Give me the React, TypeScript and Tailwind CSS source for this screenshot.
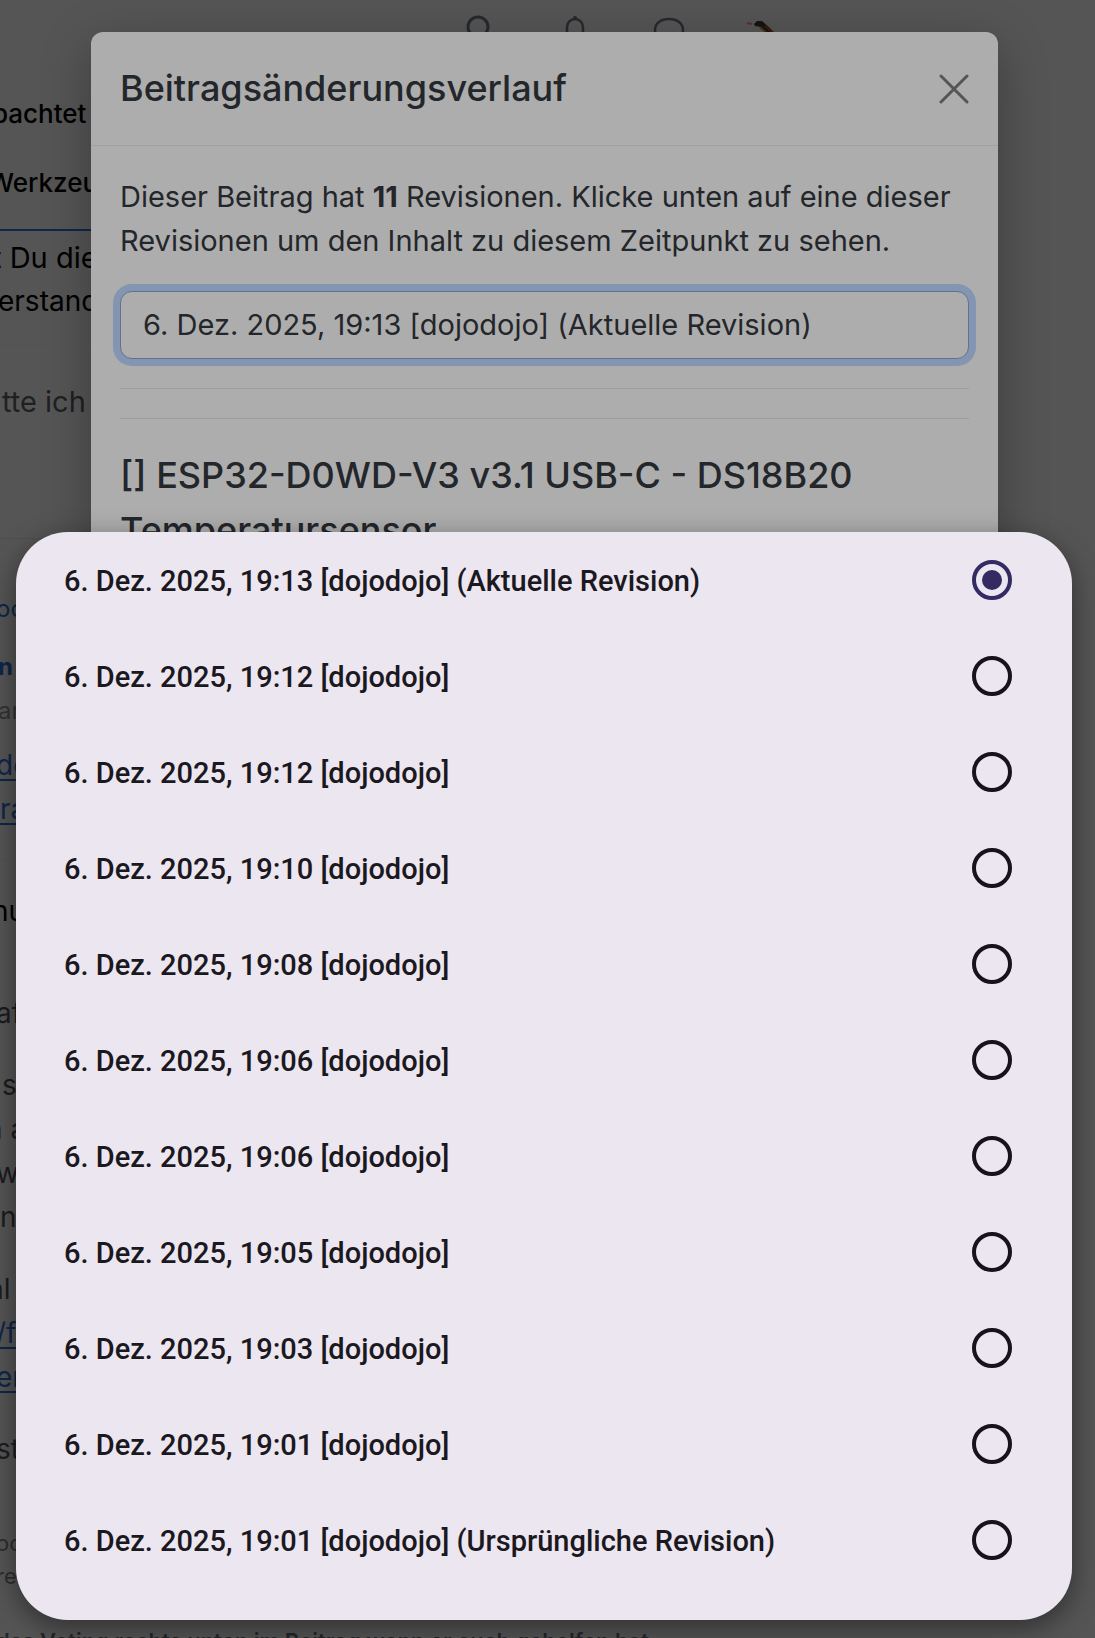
type Line = { text: string; className: string };

// Forum page lines that stay visible left of the dialog and the option sheet
const topLines: Line[] = [
  { text: "bachtet", className: "mt-[52px] -ml-2 text-[26px] font-medium text-black" },
  { text: "Werkzeu", className: "mt-[25px] -ml-3 text-[26px] font-medium text-black" },
];

const introLines: Line[] = [
  { text: "t Du die", className: "mt-[5px] -ml-2 text-[29px] text-black" },
  { text: "erstand", className: "-mt-px -ml-0.5 text-[28px] text-black" },
];

const postLines: Line[] = [
  { text: "af", className: "mt-[58px] -ml-1 text-[28px] text-[#1b1c1e]" },
  { text: "s", className: "mt-7 ml-0.5 text-[28px] text-[#1b1c1e]" },
  { text: "n a", className: "-ml-3.5 text-[28px] text-[#1b1c1e]" },
  { text: "w", className: "-ml-1 text-[28px] text-[#1b1c1e]" },
  { text: "n", className: "text-[28px] text-[#1b1c1e]" },
  { text: "al", className: "mt-7 -ml-3 text-[28px] text-[#1b1c1e]" },
];

const revisions = [
  "6. Dez. 2025, 19:13 [dojodojo] (Aktuelle Revision)",
  "6. Dez. 2025, 19:12 [dojodojo]",
  "6. Dez. 2025, 19:12 [dojodojo]",
  "6. Dez. 2025, 19:10 [dojodojo]",
  "6. Dez. 2025, 19:08 [dojodojo]",
  "6. Dez. 2025, 19:06 [dojodojo]",
  "6. Dez. 2025, 19:06 [dojodojo]",
  "6. Dez. 2025, 19:05 [dojodojo]",
  "6. Dez. 2025, 19:03 [dojodojo]",
  "6. Dez. 2025, 19:01 [dojodojo]",
  "6. Dez. 2025, 19:01 [dojodojo] (Ursprüngliche Revision)",
];

function Lines({ lines }: { lines: Line[] }) {
  return (
    <>
      {lines.map((line) => (
        <p key={line.text} className={line.className}>
          {line.text}
        </p>
      ))}
    </>
  );
}

function HeaderIcons() {
  return (
    <>
      <svg viewBox="0 0 32 32" className="h-8 w-8 shrink-0" fill="none" aria-hidden="true">
        <circle cx="15" cy="15" r="10" stroke="currentColor" strokeWidth="3" />
        <path d="M22 22l8 8" stroke="currentColor" strokeWidth="3" />
      </svg>
      <svg viewBox="0 0 32 32" className="ml-16 h-8 w-8 shrink-0" fill="none" aria-hidden="true">
        <circle cx="16" cy="6" r="2" fill="currentColor" />
        <path d="M8 26V15a8 8 0 0 1 16 0v11z" stroke="currentColor" strokeWidth="2.5" />
      </svg>
      <svg viewBox="0 0 36 36" className="ml-[60px] h-9 w-9 shrink-0" fill="none" aria-hidden="true">
        <path
          d="M8 28c-3-3-4-6-4-10C4 11 10 7 18 7s14 4 14 11-6 11-14 11c-3 0-5 0-7-1l-5 3z"
          stroke="currentColor"
          strokeWidth="2.5"
        />
      </svg>
      <svg viewBox="0 0 40 40" className="ml-[60px] h-10 w-10 shrink-0" aria-hidden="true">
        <path d="M0 11l5 1" stroke="#5e2f2c" strokeWidth="2" />
        <path d="M7 12l3-3 5 0 9 8 6 8-4 3-12-13-6-1z" fill="#17140f" />
        <path d="M13 15l6 5" stroke="#3c3311" strokeWidth="2" />
        <path d="M18 14l10 8" stroke="#451a12" strokeWidth="2" />
      </svg>
    </>
  );
}

function ForumPage() {
  return (
    <div className="flex w-3/4 flex-col whitespace-nowrap leading-[44px]">
      <header className="flex h-10 items-start pl-[463px] pt-3 text-[#26292d]">
        <HeaderIcons />
      </header>

      <Lines lines={topLines} />
      <div className="mt-6 border-b-2 border-[#10264a]" />
      <Lines lines={introLines} />

      <section className="mt-7 h-[187px] border-t border-[#575757] pt-7">
        <p className="ml-0.5 text-[29px] text-[#1f2022]">tte ich</p>
      </section>

      <section className="h-[322px] border-t border-[#4f4f4f] pt-12 text-[#10264a]">
        <p className="-ml-1 text-[24px]">
          <a href="#autor">oc</a>
        </p>
        <p className="mt-3.5 -ml-0.5 text-[24px] font-bold">n</p>
        <p className="-ml-0.5 text-[24px] text-[#333]">ar</p>
        <p className="mt-2.5 -ml-1 text-[28px]">
          <a href="#link" className="underline decoration-2 underline-offset-4">de</a>
        </p>
        <p className="text-[28px]">
          <a href="#link" className="underline decoration-2 underline-offset-4">ra</a>
        </p>
      </section>

      <section className="border-t border-[#525252] pt-7">
        <p className="-ml-2 text-[28px] text-black">nu</p>
        <Lines lines={postLines} />
        <p className="-ml-1 text-[28px] text-[#10264a]">
          <a href="#link" className="underline decoration-2 underline-offset-4">/f</a>
        </p>
        <p className="-ml-1 text-[28px] text-[#10264a]">
          <a href="#link" className="underline decoration-2 underline-offset-4">er</a>
        </p>
        <p className="mt-7 -ml-1 text-[28px] text-[#1b1c1e]">st</p>
        <footer className="mt-14 text-[22px] leading-[33px] text-[#2c2d2f]">
          <p className="-ml-1">oc</p>
          <p className="-ml-1">re</p>
          <p className="mt-8 -ml-1 font-semibold text-[#252629]">
            das Voting rechts unten im Beitrag wenn er euch geholfen hat
          </p>
        </footer>
      </section>
    </div>
  );
}

function RevisionDialog() {
  return (
    <div
      role="dialog"
      aria-labelledby="dialog-title"
      className="absolute inset-x-0 bottom-40 top-8 ml-[91px] mr-[97px] rounded-xl bg-[#adadad] text-[#23262a] shadow-[0_14px_50px_rgba(0,0,0,0.3)]"
    >
      <div className="flex items-center justify-between border-b border-[#a0a1a2] px-[29px] py-7">
        <h2 id="dialog-title" className="text-[36px] font-medium leading-[57px]">
          Beitragsänderungsverlauf
        </h2>
        <button type="button" aria-label="Schließen">
          <svg viewBox="0 0 30 30" className="h-[30px] w-[30px]" aria-hidden="true">
            <path d="M2 2l26 26M28 2L2 28" stroke="#555" strokeWidth="3" strokeLinecap="round" />
          </svg>
        </button>
      </div>

      <div className="px-[29px] pt-[29px]">
        <label htmlFor="revision" className="block text-[29px] leading-[44px]">
          Dieser Beitrag hat <strong>11</strong> Revisionen. Klicke unten auf eine dieser
          Revisionen um den Inhalt zu diesem Zeitpunkt zu sehen.
        </label>
        <select
          id="revision"
          className="mt-7 block h-[68px] w-full appearance-none rounded-xl border border-[#5f7390] bg-[#adadad] pl-[22px] text-[29px] ring-[7px] ring-[#8495b1] outline-none"
        >
          <option>{revisions[0]}</option>
        </select>
        <hr className="mt-[29px] border-[#9c9d9e]" />
        <hr className="mt-[29px] border-[#9c9d9e]" />
        <h3 className="mt-[29px] text-[36px] font-medium leading-[55px]">
          [] ESP32-D0WD-V3 v3.1 USB-C - DS18B20 Temperatursensor
        </h3>
      </div>
    </div>
  );
}

function OptionSheet() {
  return (
    <fieldset
      aria-label="Revision"
      className="absolute inset-x-0 top-[532px] ml-4 mr-[23px] rounded-[52px] bg-[#ebe6f0] pb-8 shadow-[0_8px_28px_rgba(0,0,0,0.45)]"
    >
      {revisions.map((revision, i) => (
        <label
          key={i}
          className="flex h-24 items-center justify-between pl-12 pr-[60px] font-[Roboto,sans-serif] text-[29px] font-medium text-[#1b1820]"
        >
          <span className="pt-1">{revision}</span>
          <input
            type="radio"
            name="revision-option"
            defaultChecked={i === 0}
            className="grid h-10 w-10 shrink-0 appearance-none place-items-center rounded-full border-4 border-[#17131d] before:h-5 before:w-5 before:rounded-full checked:border-[#332b62] checked:before:bg-[#332b62]"
          />
        </label>
      ))}
    </fieldset>
  );
}

export default function App() {
  return (
    <main className="relative h-screen overflow-hidden bg-[#555] font-[Inter,sans-serif]">
      <ForumPage />
      <RevisionDialog />
      <OptionSheet />
    </main>
  );
}
